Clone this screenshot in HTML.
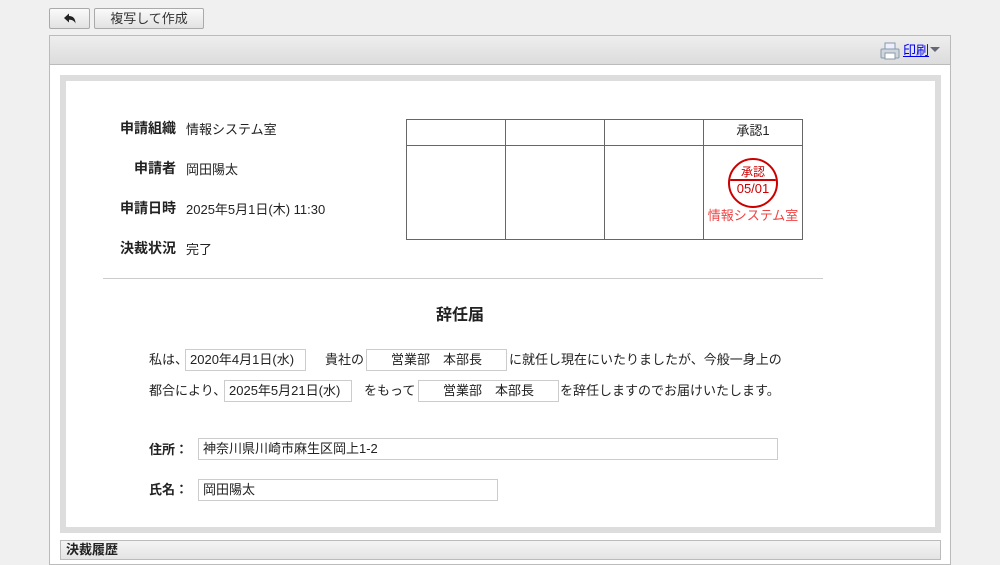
<!DOCTYPE html>
<html><head><meta charset="utf-8"><style>
*{margin:0;padding:0;box-sizing:border-box}
body{width:1000px;height:550px;background:#f0f0f0;font-family:"Liberation Sans","Noto Sans CJK JP",sans-serif;font-size:13px;color:#222;position:relative;overflow:hidden}
.a{position:absolute;white-space:nowrap}
.btn{position:absolute;top:8px;height:21px;border:1px solid #aaa;border-radius:2px;background:linear-gradient(#fafafa,#e2e2e2);text-align:center;line-height:19px;font-size:13px;color:#333}
.box{position:absolute;height:22px;border:1px solid #ccc;background:#fff;line-height:20px;padding-left:4px;white-space:nowrap}
.lbl{font-weight:bold;text-align:right;width:76px;left:100px;font-size:14px}
td{border:1px solid #666;text-align:center}
</style></head><body>
<div class="btn" style="left:49px;width:41px"><svg width="14" height="12" viewBox="0 0 14 12" style="margin-top:4px"><path d="M1 5 L6 0.5 V3 C10 3 12.5 5.5 12.5 10.5 C11 7.5 9 6.8 6 6.8 V9.5 Z" fill="#222"/></svg></div>
<div class="btn" style="left:94px;width:110px">複写して作成</div>
<div class="a" style="left:49px;top:35px;width:902px;height:530px;border:1px solid #bbb;background:#fff"></div>
<div class="a" style="left:50px;top:36px;width:900px;height:29px;background:linear-gradient(#eee,#dcdcdc);border-bottom:1px solid #bbb"></div>
<svg class="a" style="left:880px;top:42px" width="20" height="18" viewBox="0 0 20 18"><rect x="5" y="1" width="10" height="7" fill="#eef" stroke="#8899aa"/><rect x="1" y="7" width="18" height="9" rx="1" fill="#cfd6de" stroke="#8899aa"/><rect x="5" y="11" width="10" height="6" fill="#fff" stroke="#8899aa"/></svg>
<div class="a" style="left:903px;top:40px;color:#00e;text-decoration:underline">印刷</div>
<svg class="a" style="left:930px;top:47px" width="10" height="6"><path d="M0 0H10L5 5Z" fill="#667"/></svg>
<div class="a" style="left:60px;top:75px;width:881px;height:458px;border:6px solid #ddd;background:#fff"></div>
<div class="a lbl" style="top:118px">申請組織</div><div class="a" style="left:186px;top:119px">情報システム室</div>
<div class="a lbl" style="top:158px">申請者</div><div class="a" style="left:186px;top:159px">岡田陽太</div>
<div class="a lbl" style="top:198px">申請日時</div><div class="a" style="left:186px;top:199px">2025年5月1日(木) 11:30</div>
<div class="a lbl" style="top:238px">決裁状況</div><div class="a" style="left:186px;top:239px">完了</div>
<table class="a" style="left:406px;top:119px;width:397px;border-collapse:collapse">
<tr style="height:26px"><td style="width:99px"></td><td style="width:99px"></td><td style="width:99px"></td><td style="line-height:18px;vertical-align:top;padding-top:2px">承認1</td></tr>
<tr style="height:94px"><td></td><td></td><td></td><td style="vertical-align:top">
<div style="width:50px;height:50px;border:2px solid #c00;border-radius:50%;margin:12px auto 0;color:#c00;font-size:12px;line-height:15px;overflow:hidden"><div style="padding-top:5px;border-bottom:2px solid #c00;height:21px">承認</div><div style="font-size:13px">05/01</div></div>
<div style="color:#e44;margin-top:-3px">情報システム室</div></td></tr></table>
<div class="a" style="left:103px;top:278px;width:720px;height:1px;background:#ccc"></div>
<div class="a" style="left:436px;top:301px;font-size:16px;font-weight:bold">辞任届</div>
<div class="a" style="left:149px;top:349px">私は、</div>
<div class="box" style="left:185px;top:349px;width:121px">2020年4月1日(水)</div>
<div class="a" style="left:325px;top:349px">貴社の</div>
<div class="box" style="left:366px;top:349px;width:141px;padding-left:24px">営業部　本部長</div>
<div class="a" style="left:509px;top:349px">に就任し現在にいたりましたが、今般一身上の</div>
<div class="a" style="left:149px;top:380px">都合により、</div>
<div class="box" style="left:224px;top:380px;width:128px">2025年5月21日(水)</div>
<div class="a" style="left:364px;top:380px">をもって</div>
<div class="box" style="left:418px;top:380px;width:141px;padding-left:24px">営業部　本部長</div>
<div class="a" style="left:560px;top:380px">を辞任しますのでお届けいたします。</div>
<div class="a" style="left:149px;top:439px;font-weight:bold">住所：</div>
<div class="box" style="left:198px;top:438px;width:580px">神奈川県川崎市麻生区岡上1-2</div>
<div class="a" style="left:149px;top:479px;font-weight:bold">氏名：</div>
<div class="box" style="left:198px;top:479px;width:300px">岡田陽太</div>
<div class="a" style="left:60px;top:540px;width:881px;height:20px;border:1px solid #bbb;background:linear-gradient(#f4f4f4,#e4e4e4);padding-left:5px;font-weight:bold;line-height:18px">決裁履歴</div>
</body></html>
